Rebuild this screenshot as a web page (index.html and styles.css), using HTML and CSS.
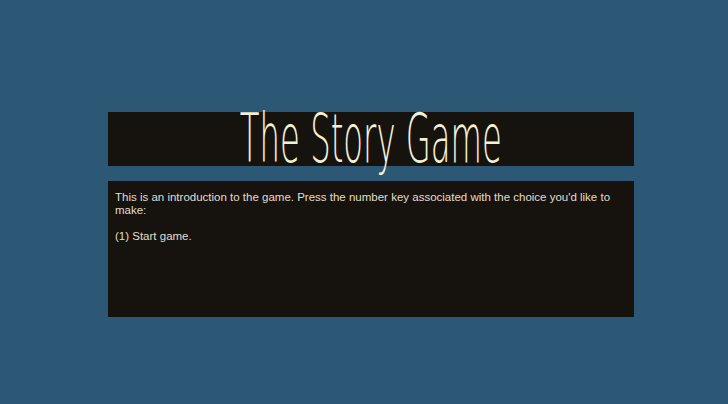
FILE: index.html
```html
<!DOCTYPE html>
<html>
<head>
<meta charset="utf-8">
<link rel="stylesheet" href="styles.css">
</head>
<body>
<main class="game">
  <header class="title-bar">
    <h1 class="title">The Story Game</h1>
  </header>
  <section class="story">
    <p>This is an introduction to the game. Press the number key associated with the choice you'd like to make:</p>
    <p>(1) Start game.</p>
  </section>
</main>
</body>
</html>
```
FILE: styles.css
```css
html, body {
  margin: 0;
  padding: 0;
  background: #2c5876;
  height: 100%;
}
.game {
  padding-top: 112px;
  padding-left: 108px;
  width: 526px;
  display: flex;
  flex-direction: column;
  gap: 15px;
}
.title-bar {
  height: 54px;
  background: #16130e;
  display: flex;
  justify-content: center;
}
.title {
  margin: 0;
  font-family: "DejaVu Sans", sans-serif;
  font-weight: 200;
  font-size: 68px;
  line-height: 54px;
  color: #f4f0d8;
  white-space: nowrap;
  transform: scaleX(0.475);
}
.story {
  height: 136px;
  box-sizing: border-box;
  background: #16130e;
  padding: 10px 7px;
  font-family: "Liberation Sans", Arial, sans-serif;
  font-size: 11.5px;
  line-height: 13px;
  color: #e2ddcc;
}
.story p {
  margin: 0 0 13px 0;
}
```
